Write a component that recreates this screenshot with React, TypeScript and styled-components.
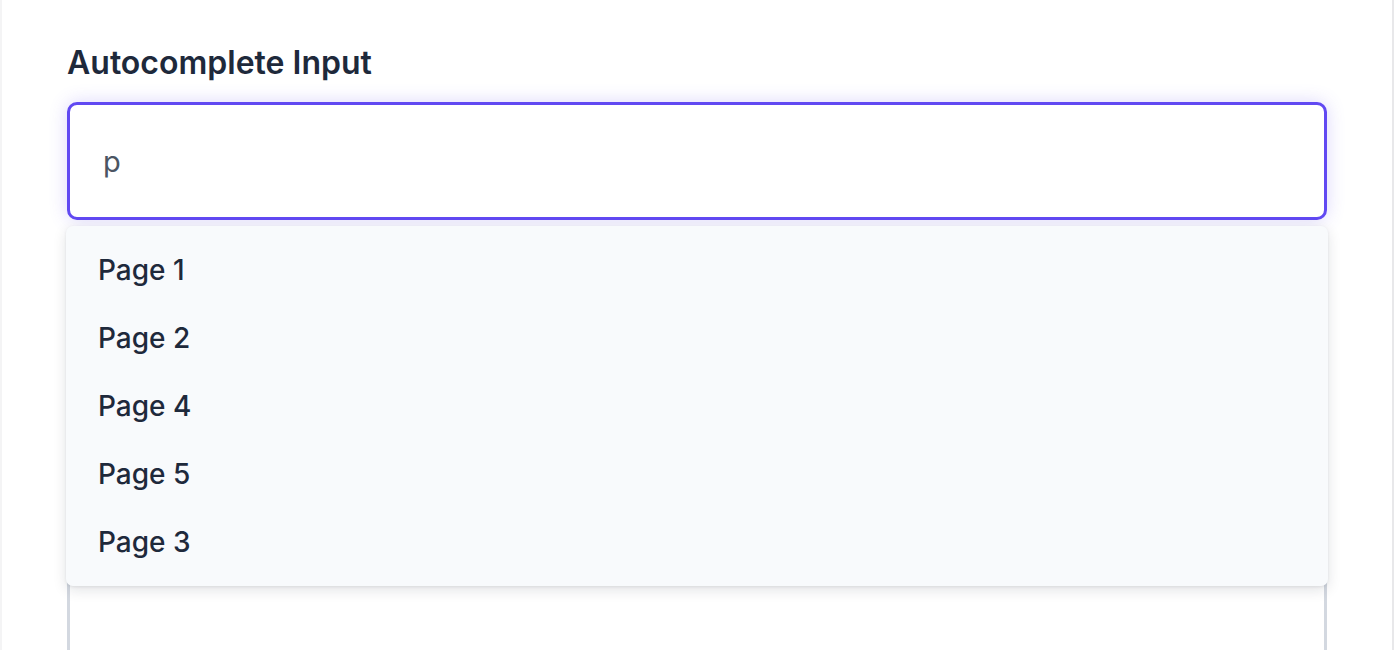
import React from "react";
import styled, { createGlobalStyle } from "styled-components";

const Global = createGlobalStyle`
  html, body { margin: 0; padding: 0; background: #ffffff; }
  body { font-family: Inter, "Noto Sans", sans-serif; -webkit-font-smoothing: antialiased; }
  * { box-sizing: border-box; }
`;

const Page = styled.div`
  width: 1396px;
  height: 650px;
  overflow: hidden;
  background: #ffffff;
`;

const Card = styled.div`
  width: 1394px;
  min-height: 650px;
  background: #ffffff;
  border-left: 2px solid #f4f4f5;
  border-right: 2px solid #e8e8ea;
  padding: 40px 65px 0 65px;
`;

const Label = styled.label`
  display: block;
  font-size: 32px;
  font-weight: 600;
  line-height: 46px;
  color: #1e293b;
  margin-bottom: 16px;
`;

const Field = styled.div`
  position: relative;
`;

const Input = styled.input<{ $focused?: boolean }>`
  display: block;
  width: 100%;
  height: 118px;
  border: 3px solid ${(p) => (p.$focused ? "#6149f2" : "#d3d8e0")};
  border-radius: 10px;
  padding: 0 33px;
  font-family: Inter, "Noto Sans", sans-serif;
  font-size: 29px;
  color: #4b5563;
  background: #ffffff;
  outline: none;
  box-shadow: ${(p) => (p.$focused ? "0 0 18px rgba(97, 73, 242, 0.22)" : "none")};
`;

const Menu = styled.ul`
  position: absolute;
  top: calc(100% + 6px);
  left: -1px;
  right: -1px;
  margin: 0;
  padding: 10px 0;
  list-style: none;
  background: #f8fafc;
  border-radius: 7px;
  box-shadow: 0 4px 14px rgba(15, 23, 42, 0.12), 0 1px 3px rgba(15, 23, 42, 0.08);
  z-index: 2;
`;

const Item = styled.li`
  height: 68px;
  display: flex;
  align-items: center;
  padding: 0 32px;
  font-size: 28px;
  font-weight: 500;
  color: #1e293b;
`;

const Second = styled.div`
  margin-top: 26px;
  height: 700px;
  border: 3px solid #d3d8e0;
  border-radius: 10px;
  background: #ffffff;
`;

export default function App() {
  const items = ["Page 1", "Page 2", "Page 4", "Page 5", "Page 3"];
  return (
    <Page>
      <Global />
      <Card>
        <Label>Autocomplete Input</Label>
        <Field>
          <Input $focused defaultValue="p" />
          <Menu>
            {items.map((t) => (
              <Item key={t}>{t}</Item>
            ))}
          </Menu>
        </Field>
        <Second />
      </Card>
    </Page>
  );
}
